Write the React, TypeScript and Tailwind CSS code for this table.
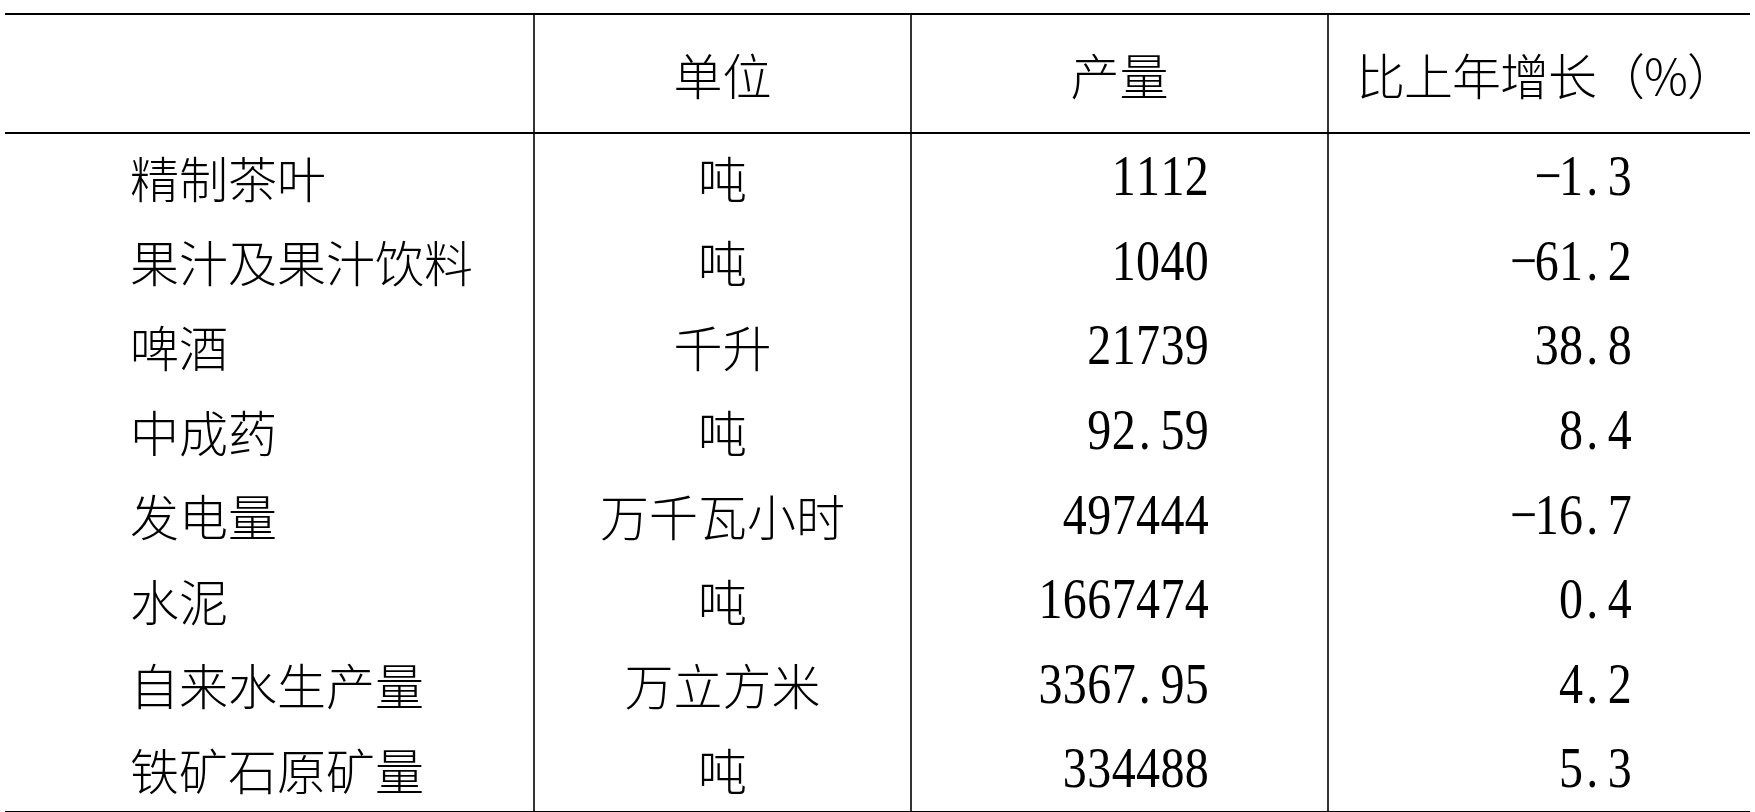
const rows = [
  { name: "精制茶叶", unit: "吨", output: "1112", growth: "-1.3" },
  { name: "果汁及果汁饮料", unit: "吨", output: "1040", growth: "-61.2" },
  { name: "啤酒", unit: "千升", output: "21739", growth: "38.8" },
  { name: "中成药", unit: "吨", output: "92.59", growth: "8.4" },
  { name: "发电量", unit: "万千瓦小时", output: "497444", growth: "-16.7" },
  { name: "水泥", unit: "吨", output: "1667474", growth: "0.4" },
  { name: "自来水生产量", unit: "万立方米", output: "3367.95", growth: "4.2" },
  { name: "铁矿石原矿量", unit: "吨", output: "334488", growth: "5.3" },
];

const cjk = "font-['Noto_Sans_CJK_SC',sans-serif]";
const num = "font-['Liberation_Serif',serif]";

// half-width cells, like the monospaced digits of a Song typeface
function Num({ value }: { value: string }) {
  return (
    <span className={`${num} inline-flex origin-center scale-y-[1.2] text-[48px] leading-none`}>
      {value.split("").map((ch, i) =>
        ch === "." ? (
          <span key={i} className="inline-block w-[24.4px] pl-[3px] text-left">.</span>
        ) : ch === "-" ? (
          <span key={i} className="inline-block w-[24.4px] text-center">−</span>
        ) : (
          <span key={i} className="inline-block w-[24.4px] text-center">{ch}</span>
        )
      )}
    </span>
  );
}

export default function App() {
  return (
    <div className={`min-h-screen bg-white pl-[5px] pt-[13px] text-black ${cjk}`}>
      <div className="w-[1745px] border-y-2 border-black">
        <div className="grid h-[119px] grid-cols-[530px_377px_417px_1fr] border-b-2 border-black text-[49px] font-light leading-none">
          <div className="border-r-2 border-[#333]" />
          <div className="flex items-center justify-center border-r-2 border-[#333]">单位</div>
          <div className="flex items-center justify-center border-r-2 border-[#333]">产量</div>
          <div className="flex items-center pl-[27px] tracking-[-1px]">比上年增长（%）</div>
        </div>
        {rows.map((r) => (
          <div key={r.name} className="grid h-[84.6px] grid-cols-[530px_377px_417px_1fr] text-[49px] font-light leading-none">
            <div className="flex items-center border-r-2 border-[#333] pl-[125px]">{r.name}</div>
            <div className="flex items-center justify-center border-r-2 border-[#333]">{r.unit}</div>
            <div className="flex items-center justify-end border-r-2 border-[#333] pr-[118px]">
              <Num value={r.output} />
            </div>
            <div className="flex items-center justify-end pr-[118px]">
              <Num value={r.growth} />
            </div>
          </div>
        ))}
      </div>
    </div>
  );
}
